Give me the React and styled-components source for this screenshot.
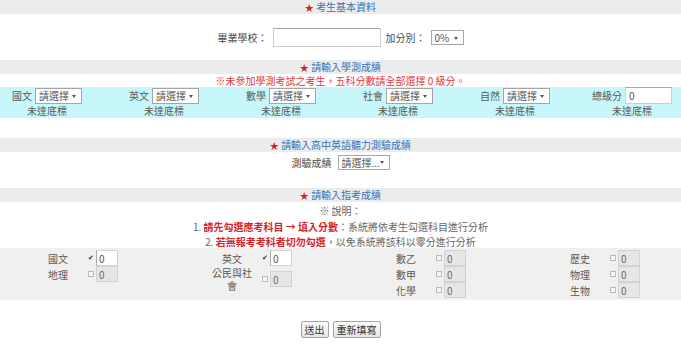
import styled, { createGlobalStyle } from "styled-components";

const GlobalStyle = createGlobalStyle`
  body {
    margin: 0;
    background: #fff;
    font-family: "Noto Sans CJK TC", "Noto Sans", sans-serif;
    font-size: 10px;
    color: #5a5a5a;
  }
  * { box-sizing: border-box; }
`;

const bandScores = [
  { name: "國文" },
  { name: "英文" },
  { name: "數學" },
  { name: "社會" },
  { name: "自然" },
  { name: "總級分", input: true },
];

const subjects = [
  [{ name: "國文", checked: true }, { name: "地理" }],
  [{ name: "英文", checked: true }, { name: "公民與社會" }],
  [{ name: "數乙" }, { name: "數甲" }, { name: "化學" }],
  [{ name: "歷史" }, { name: "物理" }, { name: "生物" }],
];

const Title = ({ children }) => (
  <TitleBar>
    <Star>★</Star> {children}
  </TitleBar>
);

const SelectBox = ({ width, height, label }) => (
  <SelectWrap>
    <Select $w={width} $h={height} defaultValue={label}>
      <option>{label}</option>
    </Select>
  </SelectWrap>
);

const App = () => {
  return (
    <Page>
      <GlobalStyle />
      <Title>考生基本資料</Title>
      <BasicRow>
        <Label>畢業學校：</Label>
        <TextInput $w={108} $h={19} />
        <Label>加分別：</Label>
        <SelectBox width={33} height={15} label="0%" />
      </BasicRow>

      <Title>請輸入學測成績</Title>
      <Note>※未參加學測考試之考生，五科分數請全部選擇 0 級分。</Note>
      <ScoreBand>
        {bandScores.map((s) => (
          <ScoreCell key={s.name}>
            <ScoreLine>
              <span>{s.name}</span>
              {s.input ? (
                <TextInput $w={47} $h={17} defaultValue="0" />
              ) : (
                <SelectBox width={47} height={16} label="請選擇" />
              )}
            </ScoreLine>
            <Status>未達底標</Status>
          </ScoreCell>
        ))}
      </ScoreBand>

      <Title>請輸入高中英語聽力測驗成績</Title>
      <ListenRow>
        <Label>測驗成績</Label>
        <SelectBox width={52} height={15} label="請選擇..." />
      </ListenRow>

      <Title>請輸入指考成績</Title>
      <Explain $h={17}>※ 說明：</Explain>
      <Explain $h={16}>
        1. <Strong>請先勾選應考科目 → 填入分數</Strong>：系統將依考生勾選科目進行分析
      </Explain>
      <Explain $h={13}>
        2. <Strong>若無報考考科者切勿勾選</Strong>，以免系統將該科以零分進行分析
      </Explain>

      <SubjectPanel>
        {subjects.map((col, i) => (
          <SubjectColumn key={i}>
            {col.map((s) => (
              <SubjectRow key={s.name}>
                <SubjectName>{s.name}</SubjectName>
                <Check type="checkbox" defaultChecked={!!s.checked} />
                <ScoreInput defaultValue="0" disabled={!s.checked} />
              </SubjectRow>
            ))}
          </SubjectColumn>
        ))}
      </SubjectPanel>

      <Actions>
        <Button>送出</Button>
        <Button>重新填寫</Button>
      </Actions>
    </Page>
  );
};

const Page = styled.div`
  width: 681px;
  display: flex;
  flex-direction: column;
`;

const TitleBar = styled.div`
  height: 14px;
  line-height: 14px;
  background: #ececec;
  text-align: center;
  color: #3574b8;
`;

const Star = styled.span`
  color: #d61f26;
  font-size: 9px;
`;

const BasicRow = styled.div`
  height: 46px;
  display: flex;
  justify-content: center;
  align-items: center;
  padding-top: 1px;
  gap: 5px;
`;

const Label = styled.span`
  color: #4a4a4a;
`;

const TextInput = styled.input`
  width: ${(p) => p.$w}px;
  height: ${(p) => p.$h}px;
  border: 1px solid #cdcdcd;
  border-top-color: #a9a9a9;
  padding: 0 0 0 3px;
  font: inherit;
  color: #555;
  background: #fff;
  outline: none;
`;

const SelectWrap = styled.span`
  position: relative;
  display: inline-flex;

  &::after {
    content: "";
    position: absolute;
    right: 6px;
    top: 50%;
    margin-top: -1px;
    border-left: 2px solid transparent;
    border-right: 2px solid transparent;
    border-top: 3px solid #555;
    pointer-events: none;
  }
`;

const Select = styled.select`
  appearance: none;
  width: ${(p) => p.$w}px;
  height: ${(p) => p.$h}px;
  padding: 0 0 0 3px;
  border: 1px solid #a6a6a6;
  border-radius: 0;
  background: #fff;
  font: inherit;
  color: #555;
  line-height: 13px;
  outline: none;
`;

const Note = styled.div`
  height: 13px;
  line-height: 13px;
  text-align: center;
  color: #e03a3e;
`;

const ScoreBand = styled.div`
  height: 31px;
  background: #c8f7fb;
  display: grid;
  grid-template-columns: repeat(6, 94px);
  column-gap: 23px;
  margin-bottom: 20px;
`;

const ScoreCell = styled.div`
  display: flex;
  flex-direction: column;
  align-items: center;
`;

const ScoreLine = styled.div`
  height: 17px;
  display: flex;
  align-items: center;
  gap: 3px;
`;

const Status = styled.div`
  height: 14px;
  line-height: 14px;
`;

const ListenRow = styled.div`
  height: 20px;
  display: flex;
  justify-content: center;
  align-items: center;
  gap: 6px;
  margin-bottom: 16px;
`;

const Explain = styled.div`
  height: ${(p) => p.$h}px;
  line-height: ${(p) => p.$h}px;
  text-align: center;
  color: #666;
`;

const Strong = styled.b`
  color: #d6252c;
  font-weight: 700;
`;

const SubjectPanel = styled.div`
  height: 52px;
  background: #f0f0f0;
  padding: 2px 0 0 34px;
  display: grid;
  grid-template-columns: repeat(3, 174px) 1fr;
  align-items: start;
`;

const SubjectColumn = styled.div`
  display: flex;
  flex-direction: column;
`;

const SubjectRow = styled.div`
  min-height: 16px;
  display: flex;
  align-items: center;
`;

const SubjectName = styled.span`
  width: 48px;
  text-align: center;
  line-height: 13px;
`;

const Check = styled.input`
  appearance: none;
  width: 6px;
  height: 6px;
  margin: 0 2px 0 6px;
  border: 1px solid #b8b8b8;
  background: #f6f6f6;
  position: relative;

  &:checked {
    border-color: transparent;
    background: transparent;
  }
  &:checked::after {
    content: "✔";
    position: absolute;
    left: -1px;
    top: -3px;
    font-size: 7px;
    line-height: 10px;
    color: #333;
  }
`;

const ScoreInput = styled.input`
  width: 22px;
  height: 16px;
  padding: 0 0 0 2px;
  border: 1px solid #d4d4d4;
  border-left-color: #aaa;
  background: #fff;
  font: inherit;
  color: #555;
  outline: none;

  &:disabled {
    background: #e6e6e6;
    border-color: #d2d2d2;
    color: #666;
  }
`;

const Actions = styled.div`
  display: flex;
  justify-content: center;
  gap: 4px;
  margin-top: 21px;
`;

const Button = styled.button`
  height: 17px;
  padding: 0 3px;
  border: 1px solid #a3a3a3;
  border-radius: 2px;
  background: linear-gradient(#fcfcfc, #e6e6e6);
  font: inherit;
  color: #333;
  line-height: 13px;
`;

export default App;
